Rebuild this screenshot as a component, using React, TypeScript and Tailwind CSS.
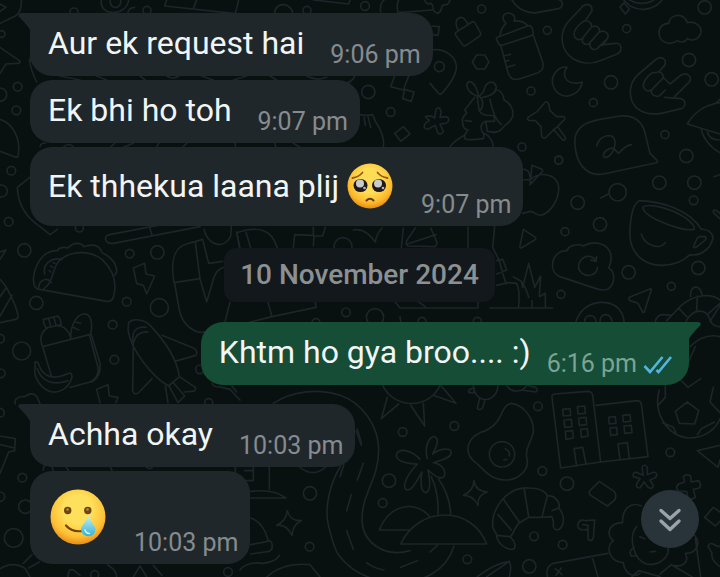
import type { ReactNode } from "react";

type Circle = [number, number, number];

function Patch({ x, y, paths, circles }: { x: number; y: number; paths: string[]; circles: Circle[] }) {
  return (
    <g transform={`translate(${x} ${y}) scale(0.33333)`}>
      {circles.map(([cx, cy, r], i) => (
        <circle key={i} cx={cx} cy={cy} r={r} />
      ))}
      {paths.map((d, i) => (
        <path key={i} d={d} />
      ))}
    </g>
  );
}

const topRight = {
  paths: [
    // mitten edge, brush
    "M246 0C262 26 290 42 320 38L386 26C402 20 400 2 384 -2",
    "M575 -6L600 18C640 38 676 26 698 -2M592 -4C620 14 650 14 676 -2M570 22L582 8L598 28L586 42Z",
    // padlock
    "M77 98L126 66Q132 63 136 70L151 98Q154 105 148 109L108 136Q101 140 97 133L77 106Q74 101 77 98ZM84 90C74 70 78 54 92 52C106 52 106 62 114 72",
    // baby bottle
    "M202 112L292 78Q302 74 306 84L310 96Q311 104 304 107L218 135Q208 138 205 128L200 120Q198 115 202 112ZM210 106C212 88 220 78 228 70C214 58 218 40 234 39C252 40 258 52 252 63C268 62 284 66 294 78M213 138L234 218C240 236 252 242 270 236L324 218C340 210 342 200 338 186L310 106M220 168L242 163M224 184L236 181M230 202L255 195",
    // hexagon, pin, flower
    "M140 165L164 165L177 186L164 207L140 207L127 186Z",
    "M5 150C44 144 82 170 79 206C76 236 50 264 34 282Q30 284 26 280L0 250",
    // moon
    "M408 201C384 200 366 224 367 246C370 272 390 290 414 288C438 284 454 266 457 246C440 252 420 250 410 240C400 228 402 212 411 202Z",
    // push pin
    "M346 306Q352 304 356 312L360 332L380 350L400 350Q408 352 402 360L380 382L372 388L346 414Q338 416 335 408L333 380L316 362L296 361Q290 358 294 352L322 334ZM370 388L398 420Q408 422 406 412L384 382",
    // call me hand
    "M452 26C462 8 488 10 486 32L466 62M452 26L414 66C386 100 392 150 426 174C456 194 490 192 516 180L562 162C580 152 574 128 556 130L522 134M460 64C446 74 432 90 432 104C434 118 446 122 456 116L484 82C488 70 474 58 460 64M488 80C500 74 514 86 506 98L478 130C466 138 452 128 458 116M510 96C524 88 540 102 532 116L502 146C490 154 476 142 480 130M530 120L516 136",
    // horns hand
    "M676 180C692 164 712 178 704 196L688 214M676 180L626 222C594 250 594 296 618 322C642 344 670 344 694 340L754 326C770 318 768 300 752 296L704 292M720 252L752 226C772 214 790 232 776 248L734 290M676 218C664 214 640 240 640 258C642 272 656 276 666 268L698 236C704 222 690 212 676 218M702 234L720 252M706 270L690 286C678 294 662 284 664 270",
    // cloud
    "M716 70C720 42 760 36 772 68C798 60 818 84 812 100C806 120 786 124 772 116C764 128 750 128 742 122C720 138 690 128 687 102C686 82 698 70 716 70Z",
    // bonnet lady
    "M146 290C136 240 112 236 110 256C112 274 128 284 146 290L160 276C166 244 190 238 198 258C202 276 182 290 158 292M134 292L120 310L104 330L110 338L98 354C96 372 100 388 114 390L104 404L104 416C120 422 144 418 160 416L162 404C148 386 152 372 164 364L194 364L192 346C172 348 146 346 146 322L142 292M200 270C216 272 220 284 222 300C242 310 252 330 248 350C240 370 226 372 214 388C200 404 184 394 172 394L168 368M180 298C186 330 196 360 214 374M150 290C162 304 158 320 152 330M106 362L124 364M60 440C74 422 90 412 106 404M162 400C178 406 190 424 190 444",
    // speech bubble
    "M440 398C454 372 480 364 510 358L570 348C612 344 634 364 644 394L660 460L682 482Q684 488 676 489L520 522C478 530 446 500 438 456C434 436 432 414 440 398ZM500 438C508 406 548 396 554 420C560 448 538 474 524 472C510 460 540 440 552 446L566 460C578 446 588 436 604 434",
    // helmet edge
    "M870 308C824 314 790 340 772 372L870 402M814 388C820 416 842 444 870 458M832 396C836 412 850 420 870 420M860 308L870 298",
  ],
  circles: [[155, 27, 12], [352, 91, 12], [590, 86, 12], [824, 22, 20], [777, 180, 20], [845, 238, 20], [28, 200, 15], [543, 247, 20], [303, 273, 12], [490, 308, 12], [705, 404, 12], [769, 468, 20], [276, 441, 12], [386, 481, 12]] as Circle[],
};

const middleRight = {
  paths: [
    // fruit with leaf
    "M96 28C112 26 120 36 120 52M126 16L156 28Q160 34 154 38L120 74ZM100 60L122 58C150 34 200 40 206 80C208 120 180 160 152 166C140 166 134 156 122 154L98 160",
    "M356 102L332 114M672 50L690 44M690 176L672 160Q666 150 676 150L690 160",
    "M100 208L136 232Q140 236 134 240L94 264Q88 264 90 258Z",
    // cup
    "M448 122C520 124 600 152 634 208C650 206 672 218 668 238C660 268 630 290 600 284C570 312 530 320 492 314C440 302 416 260 420 210C422 170 428 130 448 122ZM458 142C468 132 510 136 550 154C590 172 618 196 612 208C590 214 540 198 510 184C484 172 460 158 458 142ZM622 234Q626 228 634 230L646 230Q650 236 644 242L618 262Q608 266 612 256ZM454 222C462 254 506 272 526 248",
    // cloud sync
    "M232 272C234 256 262 250 280 258C310 240 352 248 362 282C366 300 362 312 356 324C376 334 376 370 356 386C342 394 330 390 318 386L210 350C190 342 184 322 190 300C196 282 214 270 232 272ZM318 302C306 284 280 284 268 308C258 334 284 352 306 344C318 340 322 330 322 322M320 290L318 304L302 300",
    // arrow, grass, boot
    "M482 386L418 412Q414 418 420 422L444 430L458 456Q464 460 464 452L484 390Z",
    "M14 200L8 262L26 298L48 372M20 302L38 298L50 330L20 342M20 376L54 368L80 370C88 388 88 420 86 440M70 350L94 364L98 382L116 310L134 382L152 348L148 410L166 400L166 440M94 364C106 380 112 398 116 412M126 422L126 440M0 444L188 444",
    // ghost and turtle
    "M258 484C272 442 310 422 348 428C382 432 400 458 402 484M284 484C284 462 316 460 318 484M330 484C330 458 362 456 366 484",
    "M530 482L572 438C610 404 660 398 690 420M602 410C598 376 630 370 636 404M496 484Q502 462 522 464L542 466M566 444L590 470M622 408L620 450M690 430L656 460M588 484C608 446 650 440 662 484",
    // tube edge running down the right side
    "M690 436L660 484M662 484C668 500 690 500 690 500M600 560C620 540 650 520 690 530M598 600L616 560",
  ],
  circles: [[206, 0, 12], [263, 128, 20], [383, 97, 26], [508, 68, 20], [613, 68, 20], [611, 121, 13], [330, 193, 20], [225, 215, 12], [416, 337, 20], [625, 324, 20], [544, 379, 12], [213, 403, 12]] as Circle[],
};

const middleLeft = {
  paths: [
    // taco
    "M106 202C92 180 106 130 130 108C142 96 156 92 172 92C176 82 194 80 204 84C222 64 244 68 252 80C272 72 298 72 306 98C330 108 352 132 350 156L344 166M118 208L320 244Q334 246 340 232C352 190 340 150 306 118C262 86 196 94 170 132C156 160 156 190 132 206M106 202Q110 208 118 208M116 202C118 178 144 170 154 188M134 162C128 132 152 112 186 118M152 138L158 142M148 152L152 156M160 128L164 130",
    // stick
    "M328 44L560 0M340 70L600 20M328 44Q312 48 318 62Q324 72 340 70M448 20L456 44",
    // bolts
    "M400 144L434 130L438 162L464 168L440 222L430 196L410 190Z",
    "M290 508L324 494L328 528L354 532L348 548M290 508L300 548",
    // mouse and tie
    "M522 188C512 130 520 82 560 72L608 58M522 188L600 176M586 68L600 176L620 246L642 172Q650 150 670 142M608 58L626 130L668 124M524 190L538 270C548 320 590 342 614 336M690 246L674 310M612 28C620 72 670 94 692 48L694 20M710 36L720 90",
    // pizza edges
    "M0 96L18 90L0 118M0 178C22 200 46 250 54 286Q56 296 46 298L0 308M0 230L18 204M0 288L36 226",
    // lunch bag
    "M130 298L174 288Q182 296 184 314L138 324Q130 312 130 298ZM146 296L152 318M162 294L168 316M142 324C124 336 118 356 128 380L154 468M128 380L268 344L294 442Q298 472 270 486L210 502M176 318C192 318 208 334 212 354M212 354C212 320 226 286 250 282C270 280 280 302 272 342L268 344M226 306L242 310M220 322L236 330M274 344L300 430Q304 470 276 486M104 428Q112 420 118 438C130 470 160 482 206 460Q216 456 216 472C206 506 180 518 158 516C124 510 98 470 106 442ZM112 446C124 484 160 498 204 482",
    // plane
    "M386 308C400 292 434 300 450 316C490 358 530 410 538 470L506 498C460 474 392 390 384 330ZM400 368C408 340 424 334 444 336M398 362C396 330 414 318 438 322M486 346L580 384Q596 392 588 406L524 424M400 370L398 514Q406 528 418 516L456 476M496 498L504 548M506 496L534 548L554 528L520 488M538 470L586 502Q590 514 574 514L552 516",
    "M46 552C40 536 60 528 74 530C90 516 106 522 110 530L120 550",
    "M636 490Q640 502 656 500L690 508L720 540M696 498L710 516",
  ],
  circles: [[238, 24, 12], [73, 91, 20], [389, 101, 13], [472, 97, 20], [109, 249, 20], [380, 245, 13], [478, 263, 27], [338, 314, 13], [65, 393, 27], [343, 419, 13], [0, 356, 13], [2, 460, 13], [600, 448, 13], [626, 548, 12]] as Circle[],
};

const bottomRight = {
  paths: [
    // road
    "M0 46C70 70 116 140 116 210C116 300 64 340 66 424C70 486 130 534 210 512M0 530C40 580 90 600 150 606C250 614 320 570 342 498M48 152L64 196M70 250L52 300M34 344L20 392M20 452L40 508M80 548Q104 566 132 570M182 562L232 542M270 516L292 496M0 290L12 252",
    // sun
    "M126 12C160 90 270 90 302 12M142 52L124 116L176 72M212 76L254 138L250 70M280 46L348 70L302 16",
    // turtle
    "M400 12C400 76 474 72 474 12M404 24Q380 28 388 38L402 38M418 58L412 86Q420 92 428 84L434 62M498 12C510 42 552 38 562 12M544 30L588 36Q596 28 586 22L564 16",
    // egg
    "M514 70C548 74 582 110 580 156C574 190 554 200 560 232C572 272 530 302 494 300C444 298 428 262 400 242C372 214 382 176 420 158C496 136 476 76 514 70ZM496 206Q510 212 508 228M492 240L500 238",
    // palm and island
    "M262 236C252 200 268 168 284 170C300 176 288 204 278 222C300 204 332 202 334 218C332 236 298 242 280 248C306 252 320 272 312 290C298 302 278 282 264 270C270 300 272 334 258 338C240 336 242 300 246 276C230 304 216 332 200 330C182 320 206 278 232 252C200 252 164 242 170 222C182 200 220 216 240 238M274 290C290 326 296 362 294 402M296 298C320 332 330 366 332 402M182 492C236 376 396 376 440 492ZM118 450C150 370 226 362 268 408M118 450L206 450",
    // sparkle
    "M402 302Q406 334 442 336Q412 344 414 376Q400 346 370 346Q400 334 402 302Z",
    // croissant
    "M460 446C446 396 500 318 566 324C604 324 616 334 622 348C648 344 662 372 656 384C680 410 670 448 650 450C634 446 642 434 640 424L636 410L604 412L566 412L536 430C520 448 520 466 510 470C526 484 530 504 518 508C494 510 470 486 470 464ZM492 360L538 426M552 324L566 410M622 348L606 410M474 404L514 450M470 466L510 470M656 384L636 392",
    // buildings
    "M636 52Q634 44 644 42L744 34Q756 34 758 46L782 246L662 264ZM768 76L890 62Q902 62 904 72L924 230L782 246M668 88L690 86L692 106L670 108ZM712 80L734 78L736 100L714 102ZM672 120L694 118L696 140L674 142ZM716 114L738 112L740 134L718 136ZM676 154L698 152L700 174L678 178ZM722 148L742 146L744 168L724 172ZM806 112L826 110L828 130L808 132ZM848 106L870 104L872 124L850 126ZM810 144L830 142L832 164L812 166ZM852 138L874 136L876 158L854 160ZM710 258L702 206L728 202L738 252M840 238L834 192L862 188L868 234",
    // football
    "M958 30C938 96 980 168 1046 174C1100 174 1130 142 1140 116M1042 66L1076 92L1064 132L1018 130L1006 94ZM1018 -4L1044 22L1082 -4M976 10L976 52L954 76M1120 22L1110 66L1140 98M968 128L1000 142L1010 164M1072 164L1084 146L1124 126",
    // cube, asterisk, plus, note
    "M778 304L822 334Q832 346 824 360L802 378L752 346Q744 338 750 332Z",
    "M910 286L906 262Q914 248 922 262L922 284L942 276Q958 282 944 294L930 300L940 316Q938 330 924 322L912 306L900 324Q884 324 892 308L900 296L880 290Q876 274 892 278Z",
    "M1034 306L1030 290Q1040 280 1052 288L1054 306L1076 302Q1086 316 1078 324L1060 328L1066 352Q1056 360 1044 354L1040 334L1016 334Q1004 322 1016 312Z",
    "M714 430Q720 416 736 422L764 420L760 474Q752 488 744 476L744 448L728 450Q710 448 714 430ZM728 434L744 436L744 448",
    // lion
    "M904 378C872 364 846 386 848 428C808 428 796 462 820 482C796 500 806 544 850 548C854 582 880 594 900 580M890 440C864 470 880 540 920 552C960 558 990 530 984 500M882 502Q864 514 874 528L890 528M900 470L914 476M930 474L940 470M930 516L946 514M1064 466C1084 490 1070 520 1036 520C1050 548 1024 562 1004 556M876 590L896 572L960 590M960 582L994 554L1056 590M1066 476L1082 590",
    "M622 590Q616 560 640 550L804 520M756 530L774 590M646 566L666 584M664 564L648 586",
    "M412 590Q464 550 508 544Q516 560 508 590M440 590L508 544",
    "M1072 212L1140 196M1072 212L1134 262L1140 240M1094 412L1120 382L1140 396M1094 412L1126 438L1140 424M1140 560Q1112 540 1116 520L1104 498Q1112 484 1126 496L1140 500",
  ],
  circles: [[188, 156, 13], [343, 138, 13], [147, 302, 20], [128, 369, 13], [486, 223, 38], [594, 79, 13], [607, 273, 13], [681, 311, 20], [582, 469, 13], [668, 494, 13], [382, 538, 13], [568, 559, 20], [991, 217, 13]] as Circle[],
};

const bottomLeft = {
  paths: [
    "M0 138L46 146L44 182L26 186L0 250M0 164L44 174M130 240Q130 220 148 226L180 226M155 228L160 242M196 228L206 242M330 228L336 242M440 232Q450 240 458 230",
    "M706 228L706 250M760 228L760 272L738 272M734 242L760 242M808 228L808 298M752 304Q820 296 858 324L752 324M752 384Q790 396 804 450L814 456Q822 476 808 484L752 492M752 464L804 454",
    "M862 362Q870 394 904 392Q878 404 876 436Q860 402 830 406Q858 394 862 362Z",
    "M0 536Q40 512 76 536L90 561M70 520L96 494M86 534L118 516M204 561Q204 534 220 540L240 556M322 524Q350 540 350 561M400 561L420 528L440 561M460 526L486 556M720 540Q740 514 790 520Q830 514 838 496M800 561Q850 516 930 524L960 561",
    "M1072 116L1084 160M820 40C880 0 960 -4 1020 16M895 228Q940 268 980 228M1022 228C990 280 974 350 984 400C1000 470 1010 490 1020 500",
  ],
  circles: [[0, 68, 13], [67, 263, 13], [0, 320, 14], [76, 350, 20], [41, 444, 28], [284, 554, 12], [684, 546, 13], [930, 310, 20], [929, 470, 13]] as Circle[],
};

const topMiddle = {
  paths: [
    "M122 36Q118 6 138 -4M174 38Q168 10 178 -4M174 38L276 30M254 0Q256 14 272 10Q280 14 280 30Q294 50 304 28Q304 12 320 14Q332 8 328 -4M276 78L298 80L294 106L278 104",
    "M164 228L152 260L190 270L206 228M194 268L222 276L214 304L188 296ZM44 228Q42 240 20 250",
    "M60 344Q78 348 98 344L106 364C124 390 134 420 130 444M72 352L76 376M84 350L92 382M164 400L190 380L210 402L182 424ZM256 350Q270 344 284 354L288 328Q298 316 304 336L300 352L320 350Q334 360 318 370L300 372L310 394Q302 410 292 396L286 376L264 388Q246 386 256 370L268 362Z",
  ],
  circles: [[75, 18, 13], [85, 276, 20], [152, 336, 13]] as Circle[],
};

const topLeft = {
  paths: [
    "M0 70L46 48Q66 36 64 0M0 12L18 22L0 34M0 142L58 182Q64 188 54 190L18 192L0 220M0 358C40 370 64 420 54 468Q52 474 44 470L0 454M88 180Q92 210 110 246M94 184Q86 174 94 168M120 440Q124 426 136 430M92 530L52 562Q54 636 120 680Q140 696 150 704L172 688",
    "M304 0C296 50 380 50 386 0M330 0Q330 24 350 22Q364 18 362 0M404 22Q384 24 384 38M500 0L494 18L700 40M590 0L580 26M716 0L706 40M824 40Q826 12 854 14Q876 20 878 40M940 0L1046 12L1050 0",
    "M180 228L240 240M290 228L320 240M420 228L436 240M500 228Q520 240 536 228M604 228L640 240M700 240L740 228M810 228L830 240M920 228Q950 244 980 232",
    "M190 442Q204 426 220 440M330 442L344 430M370 442L400 430M470 442L476 430M548 442L560 430M706 430V442M824 430L828 442M880 430L900 442",
  ],
  circles: [[222, 36, 12], [441, 31, 12], [921, 31, 12], [5, 102, 10], [53, 260, 13], [0, 284, 20], [49, 331, 13], [34, 512, 13], [4, 573, 18], [26, 665, 13]] as Circle[],
};

const center = {
  paths: [
    "M290 38L300 84M318 36L332 84M290 38Q390 4 412 84M460 84L464 44L520 46L520 22M520 78L522 48L548 48L556 22M640 30Q674 22 706 66Q710 40 726 24M784 84L790 24M826 24L800 62Q796 74 804 78L886 80Q894 70 888 60L872 24M802 72L888 44M984 84V22",
    "M384 246L396 290L528 262L526 246M396 290L330 306M766 246L780 264L1014 264V246M836 246L856 260M780 290L782 304",
  ],
  circles: [[609, 80, 27], [618, 277, 13], [705, 292, 26], [846, 304, 12], [1012, 304, 12], [528, 308, 12]] as Circle[],
};

function Wallpaper() {
  return (
    <svg
      aria-hidden="true"
      viewBox="0 0 720 577"
      preserveAspectRatio="xMinYMin slice"
      className="absolute inset-0 h-full w-full"
      fill="none"
      stroke="#1e2427"
      strokeWidth="5"
      strokeLinecap="round"
      strokeLinejoin="round"
    >
      <Patch x={430} y={0} {...topRight} />
      <Patch x={490} y={160} {...middleRight} />
      <Patch x={0} y={220} {...middleLeft} />
      <Patch x={340} y={380} {...bottomRight} />
      <Patch x={0} y={390} {...bottomLeft} />
      <Patch x={340} y={0} {...topMiddle} />
      <Patch x={0} y={0} {...topLeft} />
      <Patch x={140} y={220} {...center} />
    </svg>
  );
}

function PleadingFace() {
  return (
    <svg role="img" aria-label="pleading face" viewBox="0 0 46 46" className="-my-0.5 mr-0.5 ml-2 h-[46px] w-[46px] shrink-0">
      <defs>
        <radialGradient id="plead" cx="50%" cy="38%" r="62%">
          <stop offset="0.45" stopColor="#ffdc55" />
          <stop offset="0.8" stopColor="#fcb92c" />
          <stop offset="1" stopColor="#e98a12" />
        </radialGradient>
      </defs>
      <circle cx="23" cy="23" r="22.5" fill="url(#plead)" />
      <path d="M5.500 15Q12 14 15.500 9.500M30.500 9.500Q34 14 40.500 15" fill="none" stroke="#9a5a10" strokeWidth="1.800" strokeLinecap="round" />
      <ellipse cx="13.500" cy="22.500" rx="7" ry="6.600" fill="#20191a" />
      <ellipse cx="32" cy="22.500" rx="7" ry="6.600" fill="#20191a" />
      <circle cx="13" cy="20.500" r="4" fill="#c9cccd" />
      <circle cx="31" cy="20.500" r="4" fill="#c9cccd" />
      <circle cx="17.500" cy="25" r="1.300" fill="#b5b9bb" />
      <circle cx="36" cy="25" r="1.300" fill="#b5b9bb" />
      <path d="M19.500 37.500Q23 34 26.500 37.500" fill="none" stroke="#5d3a12" strokeWidth="2" strokeLinecap="round" />
    </svg>
  );
}

function SmilingTearFace() {
  return (
    <svg role="img" aria-label="smiling face with tear" viewBox="0 0 56 56" className="mr-0.5 ml-0.5 h-14 w-14 shrink-0">
      <defs>
        <radialGradient id="smile" cx="50%" cy="36%" r="64%">
          <stop offset="0.4" stopColor="#ffe05c" />
          <stop offset="0.78" stopColor="#fdc035" />
          <stop offset="1" stopColor="#ea8c14" />
        </radialGradient>
        <linearGradient id="tear" x1="0" y1="0" x2="0" y2="1">
          <stop offset="0" stopColor="#c8f0f4" />
          <stop offset="1" stopColor="#35b2d5" />
        </linearGradient>
      </defs>
      <circle cx="28" cy="28" r="27.500" fill="url(#smile)" />
      <circle cx="17.700" cy="21.500" r="3.700" fill="#70430f" />
      <circle cx="37.800" cy="21.500" r="3.700" fill="#70430f" />
      <circle cx="17.500" cy="20.500" r="1.300" fill="#b48c50" />
      <circle cx="37.500" cy="20.500" r="1.300" fill="#b48c50" />
      <path d="M16 36.500Q22 43.500 32 42" fill="none" stroke="#70430f" strokeWidth="2.200" strokeLinecap="round" />
      <path d="M38.300 26C36.500 33 31 36.500 31 40.500A7.300 6.800 0 0 0 45.600 40.500C45.600 36.500 40.300 33 38.300 26Z" fill="url(#tear)" />
      <path d="M35 41Q36 44.500 39.500 44.500" fill="none" stroke="#d6f5f8" strokeWidth="1.500" strokeLinecap="round" />
    </svg>
  );
}

function ReadTicks() {
  return (
    <svg role="img" aria-label="Read" viewBox="0 0 30 20" className="mb-1 ml-1.5 h-5 w-[30px] shrink-0" fill="none" stroke="#53b5de" strokeWidth="2.600">
      <path d="M1.500 11L7 17L19.500 2M13.500 15L15.500 17L28 2" />
    </svg>
  );
}

type BubbleProps = {
  time: string;
  children: ReactNode;
  sent?: boolean;
  tail?: boolean;
  tall?: boolean;
};

function Bubble({ time, children, sent = false, tail = false, tall = false }: BubbleProps) {
  const side = sent ? "self-end bg-[#154d37] pr-4" : "self-start bg-[#20272b] pr-3";
  const corner = !tail ? "" : sent ? "rounded-tr-none" : "rounded-tl-none";
  return (
    <li className={`relative flex max-w-[90%] items-end rounded-[22px] pb-[6px] pl-[18px] ${side} ${corner} ${tall ? "pt-[18px]" : "pt-[10px]"}`}>
      {tail && (
        <svg
          aria-hidden="true"
          viewBox="0 0 13 20"
          className={`absolute top-0 h-5 w-[13px] ${sent ? "-right-3 -scale-x-100 text-[#154d37]" : "-left-3 text-[#20272b]"}`}
          fill="currentColor"
        >
          <path d="M3 0H13V20C12 15 9 13 6.500 9.500L0.800 3.500C-0.400 1.800 0.800 0 3 0Z" />
        </svg>
      )}
      <div className={`flex items-center text-[32px] leading-10 text-[#f2f5f6] ${tall ? "mb-[13px]" : "mb-[7px]"}`}>{children}</div>
      <div className={`flex items-end ${sent ? "ml-4" : "ml-[26px]"}`}>
        <time className={`whitespace-nowrap text-[25px] leading-[30px] ${sent ? "text-[#7da392]" : "text-[#868b8e]"}`}>{time}</time>
        {sent && <ReadTicks />}
      </div>
    </li>
  );
}

export default function App() {
  return (
    <main className="relative min-h-screen overflow-hidden bg-[#081010] font-['Roboto','Noto_Sans',sans-serif]">
      <Wallpaper />
      <ul className="relative flex flex-col gap-1 pt-[13px] pr-[31px] pb-[13px] pl-[30px]">
        <Bubble time="9:06 pm" tail>
          <p>Aur ek request hai</p>
        </Bubble>
        <Bubble time="9:07 pm">
          <p>Ek bhi ho toh</p>
        </Bubble>
        <Bubble time="9:07 pm" tall>
          <p>Ek thhekua laana plij</p>
          <PleadingFace />
        </Bubble>
        <li className="mt-[18px] mb-4 self-center rounded-xl bg-[#13181c] px-4 py-3 text-[28px] leading-[30px] font-medium text-[#8b9093]">
          10 November 2024
        </li>
        <Bubble time="6:16 pm" sent tail>
          <p>Khtm ho gya broo.... :)</p>
        </Bubble>
        <li aria-hidden="true" className="h-[11px]" />
        <Bubble time="10:03 pm" tail>
          <p>Achha okay</p>
        </Bubble>
        <Bubble time="10:03 pm" tall>
          <SmilingTearFace />
        </Bubble>
      </ul>
      <button
        type="button"
        aria-label="Scroll to latest message"
        className="absolute right-[21px] bottom-[29px] flex h-[58px] w-[58px] items-center justify-center rounded-full bg-[#29333a]"
      >
        <svg viewBox="0 0 24 26" className="h-[26px] w-6" fill="none" stroke="#9ba3a8" strokeWidth="3.400" strokeLinecap="round" strokeLinejoin="round">
          <path d="M3 4.500L12 12.500L21 4.500M3 15L12 23.500L21 15" />
        </svg>
      </button>
    </main>
  );
}
